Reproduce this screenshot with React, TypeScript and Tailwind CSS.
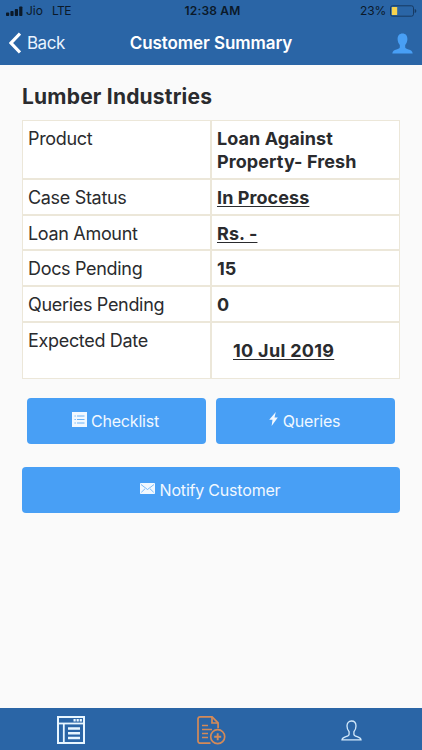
import type { ReactNode } from 'react'
import clsx from 'clsx'

type SummaryRow = {
  label: string
  value: ReactNode
  height: string
  valueClass?: string
}

const rows: SummaryRow[] = [
  {
    label: 'Product',
    value: (
      <>
        Loan Against
        <br />
        Property- Fresh
      </>
    ),
    height: 'h-[59px]',
  },
  { label: 'Case Status', value: 'In Process', height: 'h-9', valueClass: 'underline' },
  { label: 'Loan Amount', value: 'Rs. -', height: 'h-[35px]', valueClass: 'underline' },
  { label: 'Docs Pending', value: '15', height: 'h-9' },
  { label: 'Queries Pending', value: '0', height: 'h-9' },
  {
    label: 'Expected Date',
    value: '10 Jul 2019',
    height: 'h-[57px]',
    valueClass: 'underline pt-[10px] pl-[16px] tracking-[0.3px]',
  },
]

function StatusBar() {
  return (
    <div className="grid h-[22px] grid-cols-3 items-center pl-[6px] pr-[5px] text-[12px] leading-none text-[#0b1929]">
      <div className="flex items-center">
        <svg className="mr-[3px] h-[11px] w-[17px]" viewBox="0 0 17 11" fill="currentColor">
          <rect x="0" y="6.5" width="3.2" height="3.5" rx="0.8" />
          <rect x="4.4" y="5" width="3.2" height="5" rx="0.8" />
          <rect x="8.8" y="3" width="3.2" height="7" rx="0.8" />
          <rect x="13.2" y="0.5" width="3.2" height="9.5" rx="0.8" />
        </svg>
        <span>Jio</span>
        <span className="ml-[9px] tracking-[-0.6px]">LTE</span>
      </div>
      <div className="pl-[2px] text-center font-semibold tracking-[0.2px]">12:38 AM</div>
      <div className="flex items-center justify-end">
        <span className="tracking-[-0.2px]">23%</span>
        <svg className="ml-[4px] h-[12px] w-[27px]" viewBox="0 0 27 12">
          <rect x="0.5" y="0.8" width="23" height="10.4" rx="2" fill="none" stroke="#173a63" />
          <rect x="1.8" y="2" width="5.4" height="8" rx="0.6" fill="#f7d34e" />
          <path d="M24.7 4v4c1-.3 1.6-1 1.6-2s-.6-1.700-1.600-2z" fill="#173a63" />
        </svg>
      </div>
    </div>
  )
}

function Header() {
  return (
    <header className="h-[65px] bg-[#2a65a6]">
      <StatusBar />
      <div className="grid h-[43px] grid-cols-[100px_1fr_100px] items-center text-white">
        <button className="flex items-center pl-[9px] text-[17px] tracking-[-0.5px] text-[#e9f3ff]">
          <svg className="mr-[6px] mb-[2px] h-[22px] w-[12px]" viewBox="0 0 12 22" fill="none" stroke="white" strokeWidth="3.2">
            <path d="M11 1.500L2 11l9 9.500" />
          </svg>
          Back
        </button>
        <h1 className="text-center text-[17px] font-semibold tracking-[-0.07px]">Customer Summary</h1>
        <button className="flex justify-end pr-[9px]" aria-label="Profile">
          <svg className="h-[21px] w-[21px]" viewBox="0 0 21 21" fill="#489ff5">
            <path d="M10.500 0.500c3.100 0 4.900 2.200 4.900 5.400 0 2.700-1 4.500-2.200 6v2.400c0 1.100 1.500 1.700 3.300 2.200 2.300.7 4 1.600 4.200 4H.3c.2-2.400 1.900-3.300 4.200-4 1.800-.5 3.300-1.100 3.300-2.200v-2.400c-1.200-1.500-2.200-3.300-2.200-6C5.600 2.700 7.400.5 10.500.5z" />
          </svg>
        </button>
      </div>
    </header>
  )
}

function SummaryTable() {
  return (
    <div className="mt-[10px] text-[18px] leading-[23px]">
      {rows.map((row) => (
        <div key={row.label} className={clsx('grid grid-cols-2', row.height)}>
          <div className="border border-[#ece7d9] bg-white pt-[6px] pl-[5px] tracking-[-0.32px]">{row.label}</div>
          <div className="border border-[#ece7d9] bg-white pt-[6px] pl-[5px] font-bold tracking-[0.08px]">
            <div className={clsx('underline-offset-2', row.valueClass)}>{row.value}</div>
          </div>
        </div>
      ))}
    </div>
  )
}

function ActionButton({ icon, children, className }: { icon: ReactNode; children: ReactNode; className?: string }) {
  return (
    <button
      className={clsx(
        'flex h-[46px] items-center justify-center rounded-[4px] bg-[#489ff5] pr-[2px] text-[16px] tracking-[-0.2px] text-[#f1f8ff]',
        className
      )}
    >
      {icon}
      {children}
    </button>
  )
}

function ChecklistIcon() {
  return (
    <svg className="mr-[4px] mb-[4px] h-[15px] w-[15px]" viewBox="0 0 15 15">
      <rect width="15" height="15" fill="#f1f8ff" />
      <path d="M2.500 4h1.300M5 4h7.500M2.500 7.500h1.300M5 7.500h7.500M2.500 11h1.300M5 11h7.500" stroke="#489ff5" strokeWidth="0.800" />
    </svg>
  )
}

function BoltIcon() {
  return (
    <svg className="mr-[5px] mb-[4px] h-[14px] w-[9px]" viewBox="0 0 9 14" fill="#f1f8ff">
      <path d="M6.800 0L0.200 7.800h3.300L2.600 14l6.200-8.400H5.500z" />
    </svg>
  )
}

function MailIcon() {
  return (
    <svg className="mr-[5px] mb-[4px] h-[11px] w-[15px]" viewBox="0 0 15 11">
      <rect width="15" height="11" rx="0.800" fill="#f1f8ff" />
      <path d="M1 1.500l6.500 5 6.500-5M1.300 9.300l3.700-3.500M13.700 9.300L10 5.800" fill="none" stroke="#489ff5" strokeWidth="0.700" />
    </svg>
  )
}

function TabBar() {
  return (
    <nav className="grid h-[42px] grid-cols-3 bg-[#2a65a6]">
      <button className="flex justify-center pt-[8px] pl-[1px]" aria-label="Cases">
        <svg className="h-[28px] w-[28px]" viewBox="0 0 28 28" fill="none" stroke="#e8f6ff">
          <rect x="1" y="1" width="26" height="26" strokeWidth="2" />
          <path d="M1 7.500h26" strokeWidth="1.800" />
          <path d="M6.800 7.500V27" strokeWidth="1.800" />
          <path d="M16.500 4.200h8.500" strokeWidth="2.400" strokeDasharray="2.200 0.900" />
          <path d="M11 12.500h12M11 17.200h12M11 22h12" strokeWidth="2.400" />
        </svg>
      </button>
      <button className="flex justify-center pt-[8px] pl-[1px]" aria-label="New case">
        <svg className="h-[29px] w-[29px]" viewBox="0 0 29 29" fill="none" stroke="#d48a58" strokeWidth="1.700">
          <path d="M13.500 27.200H3.300A2.300 2.300 0 0 1 1 24.900V3.100A2.300 2.300 0 0 1 3.300.9h11.800l6 6v5.300" />
          <path d="M15 1v6h6" />
          <path d="M5 9.500h6M5 13.500h10M5 17.500h6M5 21.500h6" />
          <circle cx="20.700" cy="20.700" r="7" />
          <path d="M20.700 17.200v7M17.200 20.700h7" strokeWidth="1.900" />
        </svg>
      </button>
      <button className="flex justify-center pt-[12px]" aria-label="Account">
        <svg className="h-[21px] w-[21px]" viewBox="0 0 21 21" fill="none" stroke="#d2e9fb" strokeWidth="1.300">
          <path d="M10.500 1c2.800 0 4.500 1.900 4.500 5 0 2.500-.9 4.400-2.100 5.700v2.500c0 1.300 1.500 1.900 3.200 2.400 2.300.7 3.700 1.400 3.900 3.200H1c.2-1.800 1.600-2.500 3.900-3.200 1.700-.5 3.200-1.100 3.200-2.400v-2.500C6.900 10.400 6 8.500 6 6c0-3.100 1.700-5 4.500-5z" />
        </svg>
      </button>
    </nav>
  )
}

export default function App() {
  return (
    <div className="flex h-[750px] w-[422px] flex-col bg-[#fafafa] font-[Inter,sans-serif] text-[#2a2b2e]">
      <Header />
      <main className="flex-1 px-[22px] pt-[18px]">
        <h2 className="text-[21px] leading-[27px] font-bold tracking-[0.2px]">Lumber Industries</h2>
        <SummaryTable />
        <div className="mt-[19px] grid grid-cols-2 gap-[10px] px-[5px]">
          <ActionButton icon={<ChecklistIcon />}>Checklist</ActionButton>
          <ActionButton icon={<BoltIcon />}>Queries</ActionButton>
        </div>
        <ActionButton icon={<MailIcon />} className="mt-[23px] w-full">
          Notify Customer
        </ActionButton>
      </main>
      <TabBar />
    </div>
  )
}
